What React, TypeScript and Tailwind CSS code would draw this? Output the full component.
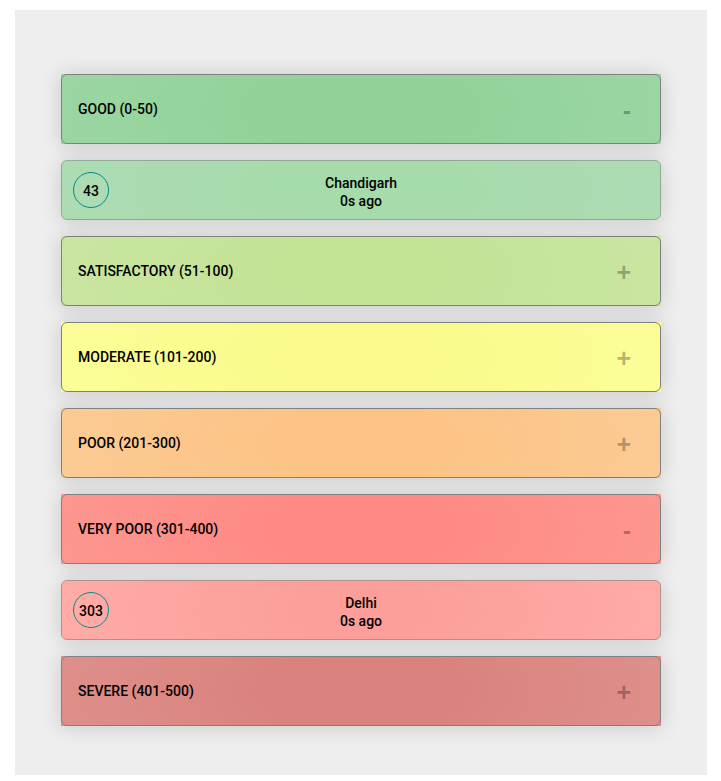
import { useState } from "react";
import clsx from "clsx";

type Station = { city: string; aqi: number; updated: string };

type Band = {
  label: string;
  header: string;
  item: string;
  stations: Station[];
};

const bands: Band[] = [
  {
    label: "GOOD (0-50)",
    header: "from-[#90d298] to-[#9bd6a2]",
    item: "border-[#93a897] from-[#a6dbab] to-[#addcb2]",
    stations: [{ city: "Chandigarh", aqi: 43, updated: "0s ago" }],
  },
  {
    label: "SATISFACTORY (51-100)",
    header: "from-[#c3e395] to-[#c9e5a0]",
    item: "border-[#a1a890] from-[#cfe8ac] to-[#d3e9b4]",
    stations: [],
  },
  {
    label: "MODERATE (101-200)",
    header: "from-[#fafb8c] to-[#fbfd97]",
    item: "border-[#adad90] from-[#fafba4] to-[#fbfcae]",
    stations: [],
  },
  {
    label: "POOR (201-300)",
    header: "from-[#fdc384] to-[#fbcb94]",
    item: "border-[#ada08f] from-[#fdcf9d] to-[#fbd4a9]",
    stations: [],
  },
  {
    label: "VERY POOR (301-400)",
    header: "from-[#ff8984] to-[#fd9690]",
    item: "border-[#ad9290] from-[#fc9f9a] to-[#ffaba6]",
    stations: [{ city: "Delhi", aqi: 303, updated: "0s ago" }],
  },
  {
    label: "SEVERE (401-500)",
    header: "from-[#d9817c] to-[#de8f8a]",
    item: "border-[#a58f8d] from-[#dd9a96] to-[#e1a4a0]",
    stations: [],
  },
];

function StationRow({ station, tone }: { station: Station; tone: string }) {
  return (
    <li
      className={clsx(
        "grid h-[60px] grid-cols-[36px_1fr_36px] items-center rounded-[6px] border bg-radial-[50%_180%_at_center] from-25% bg-origin-border px-[11px] shadow-[0_1px_20px_rgba(0,0,0,0.16)]",
        tone,
      )}
    >
      <span className="flex size-9 items-center justify-center rounded-full border border-[#008b8b] pt-0.5">
        {station.aqi}
      </span>
      <p className="pt-1 text-center leading-[18px]">
        {station.city}
        <br />
        {station.updated}
      </p>
    </li>
  );
}

function BandSection({ band }: { band: Band }) {
  const [open, setOpen] = useState(band.stations.length > 0);
  return (
    <section className="flex flex-col gap-4">
      <button
        type="button"
        aria-expanded={open}
        onClick={() => setOpen(!open)}
        className={clsx(
          "h-[70px] w-full cursor-pointer bg-radial-[50%_180%_at_center] from-25% shadow-[0_1px_20px_rgba(0,0,0,0.16)]",
          band.header,
        )}
      >
        <span className="flex h-full items-center justify-between rounded-[6px] border border-[#808080] pr-[29px] pl-4">
          {band.label}
          <span className="pt-1 font-['Liberation_Sans',sans-serif] text-[25px] font-bold text-black/30">
            {open ? "-" : "+"}
          </span>
        </span>
      </button>
      {open && band.stations.length > 0 && (
        <ul className="flex flex-col gap-4">
          {band.stations.map((station) => (
            <StationRow key={station.city} station={station} tone={band.item} />
          ))}
        </ul>
      )}
    </section>
  );
}

export default function App() {
  return (
    <main className="mt-[10px] mr-[14px] mb-[6px] ml-[15px] flex flex-col gap-4 bg-[#eeeeee] px-[46px] pt-16 pb-[49px] font-[Roboto,sans-serif] text-sm font-medium text-black">
      {bands.map((band) => (
        <BandSection key={band.label} band={band} />
      ))}
    </main>
  );
}
